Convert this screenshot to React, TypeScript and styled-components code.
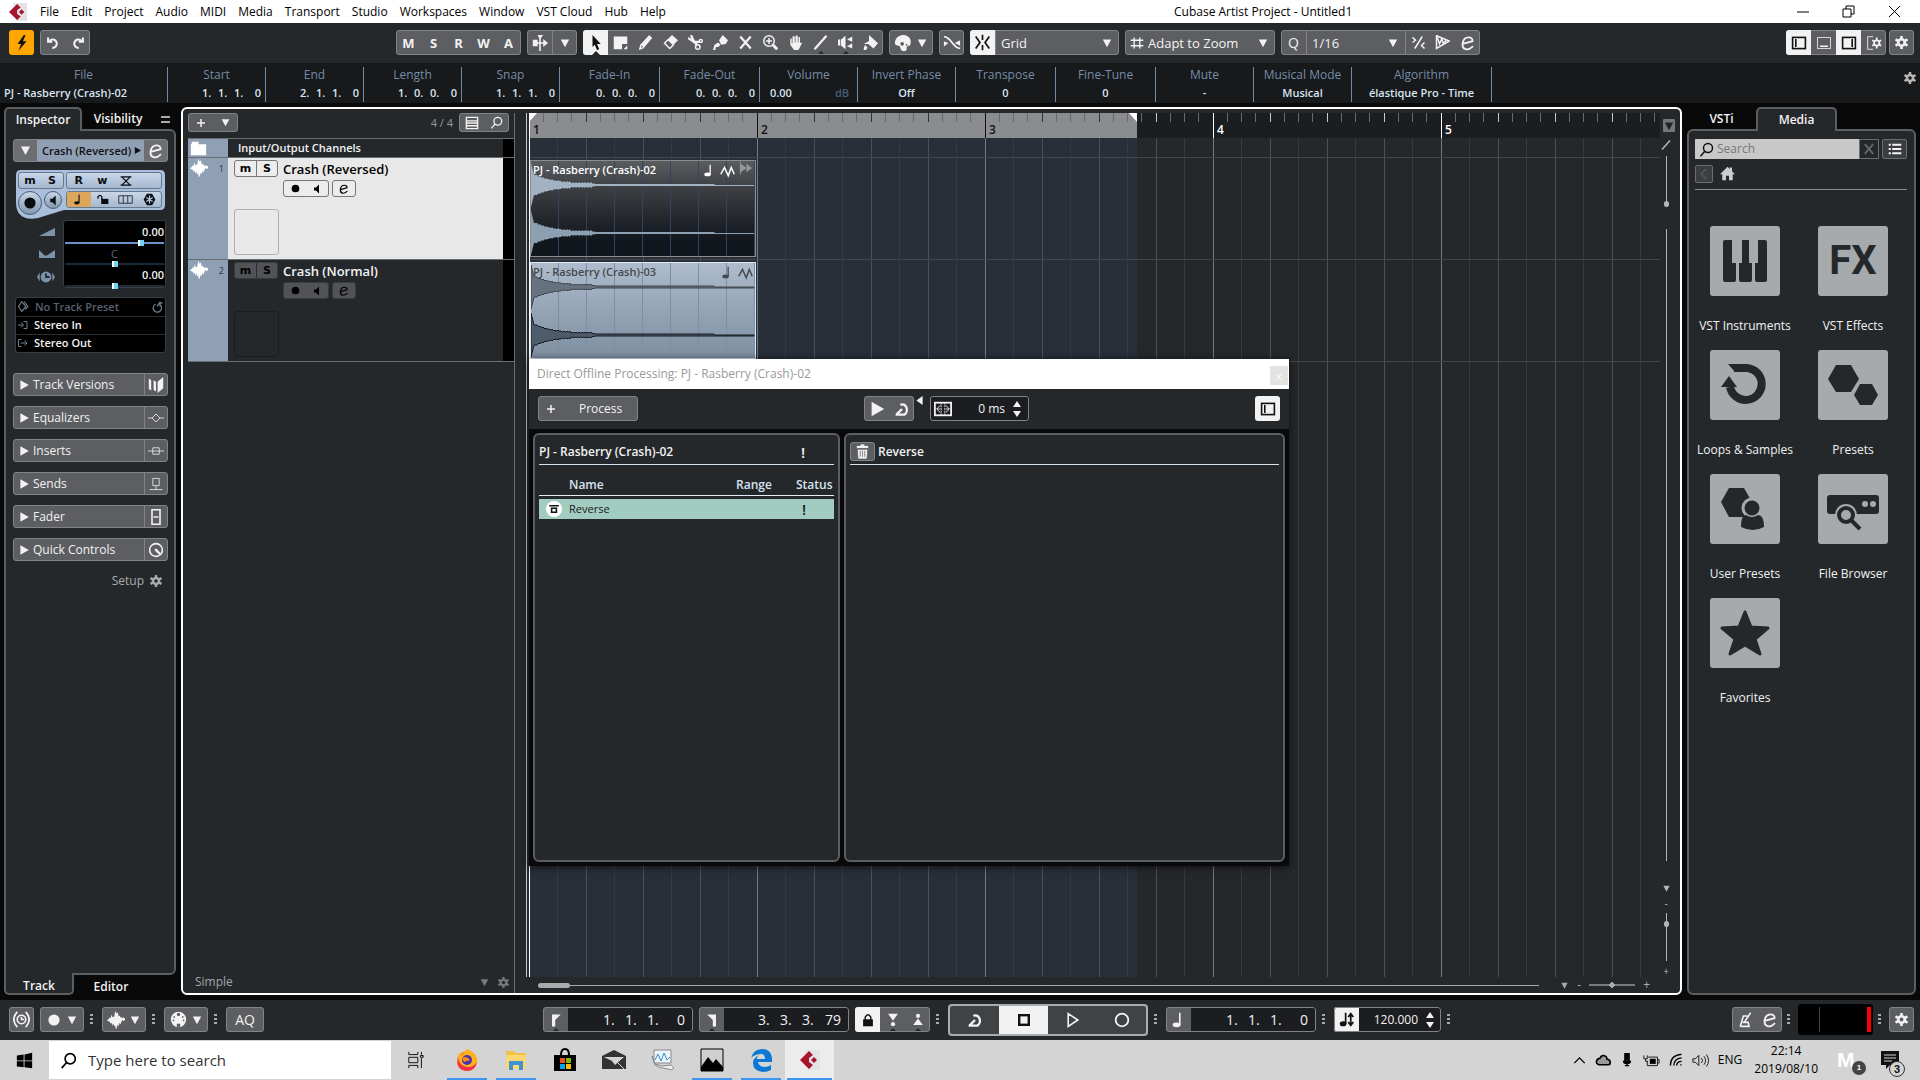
import React from "react";
import styled, { createGlobalStyle, css } from "styled-components";

const c = {
  panel: "#25282b",
  dark: "#17191b",
  black: "#090909",
  btn: "#5c5e62",
  edge: "#818387",
  blue: "#90a0b4",
  info: "#768ca8",
  light: "#f2f2f2",
  well: "#1c1d20",
};

const Global = createGlobalStyle`
  *, *::before, *::after { box-sizing: border-box; }
  body { margin: 0; background: ${c.black}; }
  body, button, input, select, table { font-family: "Open Sans", "Noto Sans", sans-serif; font-size: 12px; line-height: 16px; }
  button, input, select { margin: 0; padding: 0; border: 0; background: none; color: inherit; }
  svg { display: block; flex: none; }
`;

/* ---------- icons ---------- */

const icons: Record<string, React.ReactNode> = {
  bolt: <path d="M12 1 5 11h4l-3 8 9-11h-4l3-7z" fill="currentColor" />,
  undo: <g fill="none" stroke="currentColor" strokeWidth="3"><path d="M3 2v6h6" /><path d="M5 7a6 6 0 1 1 4 10" /></g>,
  redo: <g fill="none" stroke="currentColor" strokeWidth="3"><path d="M17 2v6h-6" /><path d="M15 7a6 6 0 1 0-4 10" /></g>,
  autoscroll: <path d="M9 4 7 0h7l-3 4v5h3V5l6 5-6 5v-4h-3v9H9v-9H7v3H1V6h6v3h2z" fill="currentColor" />,
  pointer: <path d="M6 0v16l3-3 3 7 3-1-3-7h5z" fill="currentColor" />,
  range: <path d="M1 2h18v10h-7v7H1zM19 14v5h-5z" fill="currentColor" />,
  pencil: <path d="M1 20l2-7L15 0l4 4L7 18zM5 14l-1 3 3-1z" fill="currentColor" fillRule="evenodd" />,
  eraser: <><path d="M12 0l8 7-6 6-8-7z" fill="currentColor" /><path d="M7 6l7 7-5 5-7-7z" fill="none" stroke="currentColor" strokeWidth="2" /></>,
  scissors: <g fill="none" stroke="currentColor" strokeWidth="2"><path d="M0 4l8 5 7 0" strokeWidth="3" /><path d="M4 0l4 9 4 4" strokeWidth="3" /><circle cx="17" cy="8" r="2" /><circle cx="13" cy="16" r="3" /></g>,
  glue: <path d="M13 0l7 7-3 5-6 1-3-6zM7 10l3 3-3 3-3 0-1 4H0l2-7z" fill="currentColor" />,
  cross: <path d="M3 2l14 16M17 2 3 18" stroke="currentColor" strokeWidth="3" />,
  zoomin: <g fill="none" stroke="currentColor" strokeWidth="2"><circle cx="8" cy="8" r="7" /><path d="M8 4v8M4 8h8" /><path d="M13 13l6 6" strokeWidth="4" /></g>,
  hand: <path d="M3 5q1-1 2 0v6h1V2q1-1 3 0v8h1V1q1-1 3 0v9h1V3q1-1 2 0v8l1-1q3 0 1 2l-4 8H8l-5-7z" fill="currentColor" />,
  line: <path d="M2 19 18 1" stroke="currentColor" strokeWidth="3" />,
  play2: <><path d="M0 6h3v8H0zM4 6l6-5v18l-6-5z" fill="currentColor" /><path d="M19 2v7l-7-3zM19 11v7l-7-3z" fill="currentColor" /></>,
  bucket: <path d="M8 0l12 11-6 7-7-6H1l7-4zM3 13l3 4-2 3H1v-3z" fill="currentColor" />,
  palette: <path d="M10 1c8 0 10 7 8 11-1 2-4 1-4 3 0 1 1 4-3 4-5 0-3-6-6-6-2 0-4-1-4-3 0-5 4-9 9-9zM9 9a2 2 0 1 0 .1 0zM14 11a1 1 0 1 0 .1 0z" fill="currentColor" fillRule="evenodd" />,
  xfade: <g><path d="M1 3c8 0 10 13 18 13" fill="none" stroke="currentColor" strokeWidth="2" /><path d="M1 8l5 2-5 4zM19 7l-6 3 6 3z" fill="currentColor" /></g>,
  snap: <g stroke="currentColor" strokeWidth="2" fill="none"><path d="M10 1v6M10 13v6M2 3l5 7-5 7M18 3l-5 7 5 7" /></g>,
  hash: <path d="M6 2v16M14 2v16M1 6h18M1 14h18" stroke="currentColor" strokeWidth="2" />,
  quant: <g stroke="currentColor" strokeWidth="2" fill="none"><path d="M15 2 5 18M2 3l4 4-4 3M18 10l-4 4 4 4" /></g>,
  warp: <g><path d="M2 1l17 7L2 18z" fill="none" stroke="currentColor" strokeWidth="2" /><path d="M3 3l3 9 3-7 2 6 4-4" fill="none" stroke="currentColor" strokeWidth="2" /></g>,
  e: <path d="M4 11l11-3c1-5-9-7-11 2-1 8 6 9 11 4" fill="none" stroke="currentColor" strokeWidth="2" strokeLinecap="round" />,
  gear: <><circle cx="10" cy="10" r="5" fill="none" stroke="currentColor" strokeWidth="4" /><path d="M10 0v4M10 16v4M1 5l4 3M15 12l4 3M19 5l-4 3M5 12l-4 3" stroke="currentColor" strokeWidth="4" /></>,
  zoneL: <><rect x="2" y="3" width="16" height="14" fill="none" stroke="currentColor" strokeWidth="2" /><path d="M6 5v10" stroke="currentColor" strokeWidth="2" /></>,
  zoneB: <><rect x="2" y="3" width="16" height="14" fill="none" stroke="currentColor" strokeWidth="1" /><path d="M5 14h10" stroke="currentColor" strokeWidth="2" /></>,
  zoneR: <><rect x="2" y="3" width="16" height="14" fill="none" stroke="currentColor" strokeWidth="2" /><path d="M14 5v10" stroke="currentColor" strokeWidth="2" /></>,
  zoneSet: <><path d="M9 3H3v14h6" fill="none" stroke="currentColor" /><circle cx="13" cy="10" r="3" fill="none" stroke="currentColor" strokeWidth="2" /><path d="M13 4v3M13 13v3M8 7l2 1M16 12l2 1M18 7l-2 1M10 12l-2 1" stroke="currentColor" strokeWidth="2" /></>,
  down: <path d="M3 4h14l-7 13z" fill="currentColor" />,
  right: <path d="M4 2l14 8-14 8z" fill="currentColor" />,
  left: <path d="M17 0v20L3 10z" fill="currentColor" />,
  dot: <circle cx="10" cy="10" r="7" fill="currentColor" />,
  ring: <circle cx="10" cy="10" r="7" fill="none" stroke="currentColor" strokeWidth="2" />,
  speaker: <path d="M4 7h4l6-6v18l-6-6H4z" fill="currentColor" />,
  note: <><ellipse cx="7" cy="16" rx="5" ry="3" fill="currentColor" /><path d="M11 16V1" stroke="currentColor" strokeWidth="2" /></>,
  lockOpen: <><rect x="8" y="9" width="11" height="8" fill="currentColor" /><path d="M9 10V6q-3-5-6 0v3" fill="none" stroke="currentColor" strokeWidth="2" /></>,
  lock: <><rect x="3" y="9" width="14" height="10" fill="currentColor" /><path d="M6 10V6q4-7 8 0v4" fill="none" stroke="currentColor" strokeWidth="2" /></>,
  lanes: <path d="M1 5h18v10H1zM7 5v10M13 5v10" fill="none" stroke="currentColor" strokeWidth="1" />,
  freeze: <><path d="M6 1h8l5 9-5 9H6l-5-9z" fill="currentColor" /><path d="M10 4v12M5 7l10 6M15 7 5 13" stroke="#b4c8e0" strokeWidth="2" /></>,
  xcurve: <path d="M1 3h18M1 17h18M3 3l14 14M17 3 3 17" fill="none" stroke="currentColor" strokeWidth="2" />,
  volume: <path d="M0 15 20 5v10z" fill="currentColor" />,
  pan: <path d="M0 5l7 7h3l10-7v10H0z" fill="currentColor" />,
  delay: <><path d="M3 5v10l-3-5zM17 5v10l3-5z" fill="currentColor" /><circle cx="10" cy="10" r="6" fill="currentColor" /><path d="M10 6v4h4" fill="none" stroke="#25282b" strokeWidth="2" /></>,
  diamond: <path d="M7 1l7 9-7 9-6-9zM11 1l7 9-5 5" fill="none" stroke="currentColor" strokeWidth="2" />,
  reload: <path d="M15 6a7 7 0 1 1-7-1M10 9l5-7 4 2M15 2v7" fill="none" stroke="currentColor" strokeWidth="2" />,
  inArrow: <path d="M0 10h10M6 5l5 5-5 5M11 3h7v14h-7" fill="none" stroke="currentColor" strokeWidth="2" />,
  outArrow: <path d="M7 3H1v14h6M5 10h13M13 5l5 5-5 5" fill="none" stroke="currentColor" strokeWidth="2" />,
  versions: <path d="M1 2l3 2v13l-3-2zM7 4l3 2v12l-3-2zM12 6l7-6v14l-7 6z" fill="currentColor" />,
  eq: <path d="M0 10h5l5-5 5 5-5 5-5-5M15 10h5" fill="none" stroke="currentColor" strokeWidth="1" />,
  insert: <path d="M0 10h20M6 6h8v8H6z" fill="none" stroke="currentColor" strokeWidth="1" />,
  send: <path d="M6 3h8v9H6zM10 12v5M2 17h16" fill="none" stroke="currentColor" strokeWidth="1" />,
  fader: <path d="M5 1h10v18H5zM7 10h6" fill="none" stroke="currentColor" strokeWidth="2" />,
  quick: <><circle cx="10" cy="10" r="8" fill="none" stroke="currentColor" strokeWidth="2" /><path d="M9 9l6 6" stroke="currentColor" strokeWidth="3" /></>,
  plus: <path d="M10 2v16M2 10h16" stroke="currentColor" strokeWidth="3" />,
  list: <path d="M2 2h16v16H2zM2 7h16M2 10h16M2 14h16" fill="none" stroke="currentColor" strokeWidth="2" />,
  find: <g fill="none" stroke="currentColor" strokeWidth="2"><circle cx="12" cy="8" r="6" /><path d="M8 12l-6 7" /></g>,
  folder: <path d="M2 2h8v3h9v13H1V5h1z" fill="currentColor" />,
  wave: <path d="M0 10l2-1 1-2 1 1 1-4 1 3 1-1 1 1 1-7 2 3 1-2 1 5 1-1 1 2 1 0 1 1 1-1 3 2v1l-3 1-1-1-1 2-1 3-1-2-1 4-1-2-2 6-1-5-1 1-1-3-1 2-1-3-1 1-1-2-2-1z" fill="currentColor" />,
  bullets: <path d="M1 4h3M6 4h13M1 10h3M6 10h13M1 16h3M6 16h13" stroke="currentColor" strokeWidth="3" />,
  back: <path d="M13 3l-7 7 7 7" fill="none" stroke="currentColor" strokeWidth="2" />,
  home: <path d="M10 1l3 3V2h3v5l4 4h-3v8h-5v-6H8v6H3v-8H0z" fill="currentColor" />,
  zig: <path d="M1 15l5-9 5 11 4-11 4 9" fill="none" stroke="currentColor" strokeWidth="2" />,
  reversed: <path d="M2 0v20M2 4l8 6-8 6zM11 5l7 5-7 5z" fill="currentColor" stroke="currentColor" strokeWidth="1" />,
  loop: <path d="M2 17h11a5 6 0 1 0-5-12M10 10l-7 7" fill="none" stroke="currentColor" strokeWidth="3" />,
  tail: <><rect x="1" y="3" width="18" height="14" fill="none" stroke="currentColor" strokeWidth="2" /><path d="M8 3v14M12 3v14" stroke="currentColor" strokeDasharray="2 1" /><path d="M7 6l-4 4 4 4M13 6l4 4-4 4M3 10h4M13 10h4" fill="none" stroke="currentColor" strokeWidth="1" /></>,
  trash: <path d="M7 0h6v2h5v4H2V2h5zM3 7h14l-1 13H4zM7 9v8M10 9v8M13 9v8" fill="currentColor" stroke="#5c5e62" strokeWidth="1" />,
  process: <><circle cx="10" cy="10" r="10" fill="#fff" /><path d="M4 6h12M7 9h6v5H7z" fill="none" stroke="#111" strokeWidth="2" /></>,
  clock: <g fill="none" stroke="currentColor" strokeWidth="2"><circle cx="10" cy="10" r="5" /><path d="M10 7v3h3M5 1q-8 9 0 18M15 1q8 9 0 18" /></g>,
  midi: <><circle cx="10" cy="10" r="9" fill="currentColor" /><g fill="#5c5e62"><circle cx="10" cy="4" r="2" /><circle cx="5" cy="7" r="1" /><circle cx="15" cy="7" r="1" /><circle cx="4" cy="11" r="1" /><circle cx="16" cy="11" r="1" /><path d="M8 15h4v4H8z" /></g></>,
  locL: <path d="M5 3h11l-7 7v8H5z" fill="currentColor" />,
  locR: <path d="M4 3h11v15h-4v-8z" fill="currentColor" />,
  punchIn: <><path d="M3 1h14l-7 10z" fill="currentColor" /><circle cx="10" cy="16" r="3" fill="currentColor" /></>,
  punchOut: <><path d="M3 17h14l-7-9z" fill="currentColor" /><circle cx="10" cy="4" r="3" fill="currentColor" /></>,
  stop: <rect x="4" y="4" width="12" height="12" fill="none" stroke="currentColor" strokeWidth="3" />,
  playO: <path d="M4 2l12 8-12 8z" fill="none" stroke="currentColor" strokeWidth="2" />,
  tempo: <><ellipse cx="6" cy="15" rx="4" ry="3" fill="currentColor" /><path d="M9 15V2M15 3v14M12 7l3-4 3 4M12 13l3 4 3-4" stroke="currentColor" strokeWidth="2" fill="none" /></>,
  metro: <path d="M4 18 8 5h5M7 13h7l1 5H4M9 13l8-12" fill="none" stroke="currentColor" strokeWidth="2" />,
  windows: <path d="M1 4l8-1v7H1zM10 3l9-2v9h-9zM1 11h8v7l-8-1zM10 11h9v8l-9-1z" fill="currentColor" />,
  taskview: <path d="M2 1v3h10V1M2 7h10v6H2zM2 19v-3h10v3M16 1v3M16 8v11M15 5h3v2h-3z" fill="none" stroke="currentColor" strokeWidth="1" />,
  chevUp: <path d="M2 14l8-8 8 8" fill="none" stroke="currentColor" strokeWidth="2" />,
  cloud: <path d="M5 16q-4-1-3-5 1-3 4-3 3-6 8-2 1 1 1 3 4 0 4 4 0 3-3 3z" fill="#999" stroke="currentColor" strokeWidth="2" />,
  mic: <path d="M7 1h6v11H7zM5 11q0 4 5 4t5-4M10 15v4M7 18h6" fill="currentColor" stroke="currentColor" strokeWidth="2" />,
  battery: <><path d="M6 6h11v10H5v-5M17 9h2v4h-2M1 4v4h4V4M3 8v3h3" fill="none" stroke="currentColor" strokeWidth="1" /><path d="M8 8h7v6H8z" fill="currentColor" /></>,
  wifi: <path d="M2 18Q2 3 18 2M7 18q0-10 11-11M11 18q0-6 7-6M16 17h2" fill="none" stroke="currentColor" strokeWidth="2" />,
  sound: <path d="M1 8h3l4-4v12l-4-4H1zM11 7q3 3 0 6M14 5q4 5 0 10M17 3q5 7 0 14" fill="none" stroke="currentColor" strokeWidth="1" />,
};

const Icon = ({ n, s = 16 }: { n: string; s?: number }) => (
  <svg width={s} height={s} viewBox="0 0 20 20" aria-hidden="true">{icons[n]}</svg>
);

const CubaseMark = ({ s }: { s: number }) => (
  <svg width={s} height={s} viewBox="0 0 20 20" aria-hidden="true">
    <path d="M5 0h15v20H8z" fill="#e3e3e5" />
    <path d="M9 1l4 4-4 3v4l4 3-4 4-9-9z" fill="#a8142c" />
    <path d="M14 7l3 3-3 3-3-3z" fill="#a8142c" />
  </svg>
);

/* ---------- shared parts ---------- */

const Row = styled.div<{ $gap?: number }>`
  display: flex;
  align-items: center;
  gap: ${(p) => p.$gap ?? 0}px;
`;

const Group = styled.div`
  position: relative;
  display: flex;
  height: 25px;
  border-radius: 3px;
  background: ${c.btn};
  color: ${c.light};
  overflow: hidden;
  &::after {
    content: "";
    position: absolute;
    inset: 0;
    border: 1px solid ${c.edge};
    border-radius: 3px;
    pointer-events: none;
  }
`;

const Tool = styled.button<{ $on?: boolean; $w?: number; $mark?: boolean; $split?: boolean }>`
  position: relative;
  display: flex;
  flex: 1 0 auto;
  align-items: center;
  justify-content: center;
  gap: 4px;
  min-width: ${(p) => p.$w ?? 25}px;
  font-weight: 700;
  font-size: 13px;
  ${(p) => p.$on && css`background: ${c.light}; color: #111; z-index: 1;`}
  ${(p) => p.$split && css`border-left: 1px solid ${c.edge};`}
  ${(p) => p.$mark && css`
    &::after {
      content: "";
      position: absolute;
      bottom: 0;
      border: 4px solid transparent;
      border-top: 0;
      border-bottom-color: ${c.panel};
    }
  `}
`;

const Dots = styled.span`
  width: 3px;
  height: 12px;
  margin-right: 3px;
  background: repeating-linear-gradient(#aaa 0 2px, transparent 2px 4px);
`;

const Range = styled.input<{ $fill?: string; $thumb?: string }>`
  appearance: none;
  display: block;
  width: 100%;
  height: 6px;
  background: linear-gradient(${(p) => p.$fill ?? "#1c2a35"}, ${(p) => p.$fill ?? "#1c2a35"}) center / 100% 2px no-repeat;
  &::-webkit-slider-thumb {
    appearance: none;
    width: 6px;
    height: 6px;
    background: ${(p) => p.$thumb ?? "linear-gradient(90deg, #fff 2px, #6fd3f5 2px)"};
  }
`;

/* ---------- menu bar ---------- */

const MenuBar = styled.header`
  position: relative;
  display: flex;
  align-items: center;
  height: 23px;
  padding: 0 18px 0 9px;
  background: #fff;
  color: #000;
`;
const Menus = styled.nav`
  display: flex;
  flex: 1;
  gap: 12px;
  margin-left: 13px;
`;
const WindowTitle = styled.h1`
  position: absolute;
  left: 1174px;
  margin: 0;
  font-size: 12px;
  font-weight: 400;
`;
const WinButtons = styled.div`
  display: flex;
  gap: 31px;
`;

const menus = ["File", "Edit", "Project", "Audio", "MIDI", "Media", "Transport", "Studio", "Workspaces", "Window", "VST Cloud", "Hub", "Help"];

/* ---------- toolbar ---------- */

const ToolBar = styled.div`
  display: flex;
  align-items: center;
  justify-content: space-between;
  height: 40px;
  padding: 0 6px 1px 9px;
  background: ${c.panel};
`;
const Activate = styled.button`
  display: grid;
  place-items: center;
  width: 25px;
  height: 25px;
  border-radius: 3px;
  background: #ffa600;
  color: #111;
`;
const SelectBox = styled.label<{ $w: number }>`
  position: relative;
  display: flex;
  align-items: center;
  width: ${(p) => p.$w}px;
  padding-left: 5px;
  gap: 4px;
  border-left: 1px solid ${c.edge};
  &:first-child { border-left: 0; }
  svg:last-child { position: absolute; right: 6px; pointer-events: none; }
`;
const Select = styled.select`
  appearance: none;
  flex: 1;
  height: 23px;
  font-size: 13px;
  color: ${c.light};
`;

/* ---------- info line ---------- */

const InfoLine = styled.div`
  display: flex;
  height: 40px;
  padding: 4px 4px 1px 0;
  background: ${c.dark};
`;
const InfoCell = styled.div<{ $w: number; $align: string }>`
  display: flex;
  flex-direction: column;
  justify-content: space-between;
  width: ${(p) => p.$w}px;
  padding: 0 4px 1px 4px;
  border-right: 1px solid #6f8aa6;
  color: #d8e4f2;
  font-size: 11px;
  font-weight: 600;
  text-align: ${(p) => p.$align};
  white-space: nowrap;
`;
const InfoLabel = styled.span`
  color: ${c.info};
  font-size: 12px;
  line-height: 15px;
  font-weight: 400;
  text-align: center;
`;
const Split = styled.span`
  display: flex;
  justify-content: space-between;
  padding: 0 4px 0 6px;
  i { color: #4a5f78; font-style: normal; }
`;
const Time = styled.span<{ $pitch: number; $last: number }>`
  display: grid;
  grid-template-columns: repeat(3, ${(p) => p.$pitch}px) ${(p) => p.$last}px;
  justify-content: end;
  text-align: left;
  span:last-child { text-align: right; }
`;
const TimeValue = ({ v, pitch = 16, last = 11 }: { v: string; pitch?: number; last?: number }) => (
  <Time $pitch={pitch} $last={last}>{v.split(" ").map((p, i) => <span key={i}>{p}</span>)}</Time>
);
const InfoGear = styled.button`
  margin-left: auto;
  height: 22px;
  color: #b9b9b9;
`;

const infoCells: [string, string, number, string][] = [
  ["File", "PJ - Rasberry (Crash)-02", 168, "left"],
  ["Start", "1. 1. 1. 0", 98, "time"],
  ["End", "2. 1. 1. 0", 98, "time"],
  ["Length", "1. 0. 0. 0", 98, "time"],
  ["Snap", "1. 1. 1. 0", 98, "time"],
  ["Fade-In", "0. 0. 0. 0", 100, "time"],
  ["Fade-Out", "0. 0. 0. 0", 100, "time"],
  ["Volume", "0.00", 98, "volume"],
  ["Invert Phase", "Off", 98, "center"],
  ["Transpose", "0", 100, "center"],
  ["Fine-Tune", "0", 100, "center"],
  ["Mute", "-", 98, "center"],
  ["Musical Mode", "Musical", 98, "center"],
  ["Algorithm", "élastique Pro - Time", 140, "center"],
];

/* ---------- main layout ---------- */

const Shell = styled.div`
  position: relative;
  display: flex;
  flex-direction: column;
  min-height: 100vh;
  background: ${c.black};
  color: ${c.light};
`;
const Main = styled.main`
  display: grid;
  flex: 1;
  grid-template-columns: 172px minmax(0, 1fr) 229px;
  gap: 5px;
  padding: 4px 4px 5px 4px;
`;
const Side = styled.aside`
  display: flex;
  flex-direction: column;
`;
const TabRow = styled.div<{ $bottom?: boolean }>`
  position: relative;
  z-index: 1;
  display: flex;
  align-items: center;
  height: ${(p) => (p.$bottom ? 22 : 24)}px;
  ${(p) => (p.$bottom ? "margin-top: -2px;" : "margin-bottom: -2px;")}
`;
const Tab = styled.button<{ $on?: boolean; $w: number; $bottom?: boolean }>`
  width: ${(p) => p.$w}px;
  height: 100%;
  font-weight: 600;
  ${(p) => p.$on && css`
    background: ${c.panel};
    border: 2px solid ${c.btn};
    border-radius: 5px 5px 0 0;
    border-bottom: 0;
  `}
  ${(p) => p.$bottom && css`padding-top: 5px;`}
  ${(p) => p.$on && p.$bottom && css`
    border: 2px solid ${c.btn};
    border-top: 0;
    border-radius: 0 0 5px 5px;
  `}
`;
const SidePanel = styled.div<{ $pad: string; $corner: string }>`
  flex: 1;
  padding: ${(p) => p.$pad};
  border: 2px solid ${c.btn};
  border-radius: ${(p) => p.$corner};
  background: ${c.panel};
`;

/* ---------- inspector ---------- */

const Burger = styled.span`
  width: 9px;
  height: 7px;
  margin-left: auto;
  margin-right: 6px;
  border: solid #aaa;
  border-width: 2px 0;
`;
const NameBar = styled.div`
  display: flex;
  height: 23px;
  border: 1px solid ${c.edge};
  border-radius: 3px;
  overflow: hidden;
  background: #6d6e71;
`;
const TrackName = styled.div`
  display: flex;
  flex: 1;
  align-items: center;
  justify-content: space-between;
  padding: 0 2px 0 5px;
  background: ${c.blue};
  color: #111;
  font-size: 11px;
  font-weight: 600;
  white-space: nowrap;
`;
const Cell24 = styled.button`
  display: grid;
  place-items: center;
  width: 23px;
`;
const Controls = styled.div`
  position: relative;
  display: grid;
  grid-template-columns: 46px 96px;
  align-content: start;
  gap: 2px 2px;
  width: 149px;
  height: 50px;
  margin: 8px 0 0 3px;
  padding: 2px;
  color: #0b0d10;
`;
const Blob = styled.svg`
  position: absolute;
  inset: 0;
`;
const Strip = styled.div<{ $cols: number }>`
  position: relative;
  display: grid;
  grid-template-columns: repeat(${(p) => p.$cols}, 1fr);
  height: 17px;
  border: 1px solid #67798e;
  border-radius: 3px;
  background: linear-gradient(#c8d6e8, #a5b8d0);
  overflow: hidden;
`;
const StripBtn = styled.button<{ $hot?: boolean }>`
  display: grid;
  place-items: center;
  font: 700 11px/15px "DejaVu Sans", sans-serif;
  background: ${(p) => (p.$hot ? "#dca75c" : "none")};
`;
const Rounds = styled.div`
  position: relative;
  display: flex;
  align-items: flex-start;
  gap: 2px;
`;
const Round = styled.button<{ $s: number }>`
  display: grid;
  place-items: center;
  width: ${(p) => p.$s}px;
  height: ${(p) => p.$s}px;
  border: 1px solid #4a5c70;
  border-radius: 50%;
  background: linear-gradient(#c8d6e8, #8298b2);
`;
const Levels = styled.div`
  display: grid;
  grid-template-columns: 50px 103px;
`;
const LevelIcons = styled.div`
  display: flex;
  flex-direction: column;
  align-items: flex-end;
  gap: 6px;
  padding: 4px 8px 0 0;
  color: #7c92ab;
`;
const LevelBox = styled.div`
  height: 68px;
  padding: 3px 1px 0;
  border: 1px solid #353d45;
  border-radius: 3px;
  background: #000;
  font-size: 11px;
  line-height: 16px;
  font-weight: 600;
  text-align: right;
`;
const PanValue = styled.div`
  color: #4f6a8a;
  font-weight: 400;
  text-align: center;
  line-height: 15px;
`;
const Routing = styled.div`
  margin: 9px 2px 20px;
  border: 1px solid #353d45;
  border-radius: 3px;
  background: #000;
`;
const Route = styled.div<{ $dim?: boolean }>`
  display: flex;
  align-items: center;
  gap: 6px;
  height: 18px;
  padding: 0 2px 1px;
  border-top: 1px solid #262d33;
  font-size: 11px;
  line-height: 14px;
  font-weight: 600;
  color: ${(p) => (p.$dim ? "#59636f" : c.light)};
  &:first-child { border-top: 0; }
  svg { color: #6f8394; }
  span { flex: 1; }
`;
const Sections = styled.div`
  display: flex;
  flex-direction: column;
  gap: 10px;
`;
const Section = styled.button`
  display: flex;
  align-items: center;
  height: 23px;
  padding-left: 4px;
  border: 1px solid ${c.edge};
  border-radius: 3px;
  background: ${c.btn};
  gap: 3px;
  text-align: left;
  span { flex: 1; }
`;
const SectionIcon = styled.i`
  display: grid;
  place-items: center;
  width: 23px;
  height: 21px;
  border-left: 1px solid ${c.edge};
`;
const Setup = styled.button`
  display: flex;
  align-items: center;
  gap: 6px;
  margin: 12px 6px 0 auto;
  color: #aaa;
`;

const sections: [string, string][] = [
  ["Track Versions", "versions"],
  ["Equalizers", "eq"],
  ["Inserts", "insert"],
  ["Sends", "send"],
  ["Fader", "fader"],
  ["Quick Controls", "quick"],
];

const Inspector = () => (
  <Side>
    <TabRow>
      <Tab $on $w={78}>Inspector</Tab>
      <Tab $w={72}>Visibility</Tab>
      <Burger />
    </TabRow>
    <SidePanel $pad="8px 6px 8px 7px" $corner="0 6px 6px 0">
      <NameBar>
        <Cell24 aria-label="Collapse"><Icon n="down" s={13} /></Cell24>
        <TrackName>Crash (Reversed)<Icon n="right" s={9} /></TrackName>
        <Cell24 aria-label="Edit channel"><Icon n="e" s={18} /></Cell24>
      </NameBar>
      <Controls>
        <Blob width="149" height="50" viewBox="0 0 149 50" aria-hidden="true">
          <path d="M5 0h139q5 0 5 5v30q0 5-5 5H48L22 48Q0 52 0 32V5q0-5 5-5z" fill="#a9bfdc" />
        </Blob>
        <Strip $cols={2}><StripBtn>m</StripBtn><StripBtn>S</StripBtn></Strip>
        <Strip $cols={4}><StripBtn>R</StripBtn><StripBtn>w</StripBtn><StripBtn aria-label="Fades"><Icon n="xcurve" s={12} /></StripBtn></Strip>
        <Rounds>
          <Round $s={24} aria-label="Record"><Icon n="dot" s={16} /></Round>
          <Round $s={18} aria-label="Monitor"><Icon n="speaker" s={11} /></Round>
        </Rounds>
        <Strip $cols={4}>
          <StripBtn $hot aria-label="Timebase"><Icon n="note" s={11} /></StripBtn>
          <StripBtn aria-label="Lock"><Icon n="lockOpen" s={13} /></StripBtn>
          <StripBtn aria-label="Lanes"><Icon n="lanes" s={15} /></StripBtn>
          <StripBtn aria-label="Freeze"><Icon n="freeze" s={13} /></StripBtn>
        </Strip>
      </Controls>
      <Levels>
        <LevelIcons><Icon n="volume" /><Icon n="pan" /><Icon n="delay" s={18} /></LevelIcons>
        <LevelBox>
          0.00
          <Range type="range" aria-label="Volume" $fill="#6b92c4" defaultValue={78} />
          <PanValue>C</PanValue>
          <Range type="range" aria-label="Pan" defaultValue={50} />
          0.00
          <Range type="range" aria-label="Delay" defaultValue={50} />
        </LevelBox>
      </Levels>
      <Routing>
        <Route $dim><Icon n="diamond" s={11} /><span>No Track Preset</span><Icon n="reload" s={12} /></Route>
        <Route><Icon n="inArrow" s={10} /><span>Stereo In</span></Route>
        <Route><Icon n="outArrow" s={10} /><span>Stereo Out</span></Route>
      </Routing>
      <Sections>
        {sections.map(([t, i]) => (
          <Section key={t}><Icon n="right" s={12} /><span>{t}</span><SectionIcon><Icon n={i} s={16} /></SectionIcon></Section>
        ))}
      </Sections>
      <Setup>Setup<Icon n="gear" s={12} /></Setup>
    </SidePanel>
    <TabRow $bottom>
      <Tab $on $bottom $w={70}>Track</Tab>
      <Tab $bottom $w={74}>Editor</Tab>
    </TabRow>
  </Side>
);

/* ---------- project window ---------- */

const Project = styled.section`
  display: grid;
  grid-template-columns: 332px minmax(0, 1fr) 20px;
  padding-top: 4px;
  border: 2px solid #fff;
  border-radius: 6px;
  background: ${c.panel};
`;
const TrackList = styled.div`
  display: flex;
  flex-direction: column;
  padding-left: 5px;
  border-right: 1px solid #6b6d70;
`;
const ListHead = styled.div`
  display: flex;
  align-items: center;
  justify-content: space-between;
  height: 25px;
  padding: 0 5px 6px 0;
`;
const SmallGroup = styled(Group)`
  height: 19px;
`;
const Counter = styled.span`
  color: #95989c;
  font-size: 11px;
`;
const IoRow = styled.div`
  display: grid;
  grid-template-columns: 40px 1fr 11px;
  height: 20px;
  border: solid #6b6d70;
  border-width: 1px 0;
  font-weight: 600;
  font-size: 11px;
  line-height: 18px;
`;
const ColorBar = styled.div`
  display: flex;
  justify-content: space-between;
  align-items: flex-start;
  padding: 1px 4px 0 2px;
  background: ${c.blue};
  color: #fff;
`;
const TrackNo = styled.span`
  padding-top: 2px;
  color: #333;
  font-size: 9px;
`;
const RowBody = styled.div`
  padding-left: 10px;
`;
const BlackEnd = styled.div`
  background: #000;
`;
const Track = styled.div<{ $on?: boolean }>`
  display: grid;
  grid-template-columns: 40px 1fr 11px;
  height: 102px;
  border-bottom: 1px solid #6b6d70;
  ${(p) => p.$on && css`background: #e8e8e8; color: #000;`}
`;
const TrackBody = styled.div`
  display: grid;
  grid-template-columns: 45px 1fr;
  grid-template-rows: 20px 20px 56px;
  column-gap: 4px;
  padding: 1px 6px;
`;
const MS = styled.div<{ $on?: boolean }>`
  display: grid;
  grid-auto-flow: column;
  grid-auto-columns: 1fr;
  width: max-content;
  min-width: 22px;
  height: 17px;
  margin-top: 1px;
  border: 1px solid ${(p) => (p.$on ? "#777" : "#393c3f")};
  border-radius: 3px;
  background: ${(p) => (p.$on ? "#ececec" : "#515356")};
  color: #000;
  button { display: grid; place-items: center; min-width: 21px; font: 700 11px/15px "DejaVu Sans", sans-serif; }
  button + button { border-left: 1px solid ${(p) => (p.$on ? "#777" : "#2c2e30")}; }
`;
const TrackTitle = styled.h2`
  margin: 0;
  font-size: 13px;
  line-height: 20px;
  font-weight: 600;
`;
const TrackButtons = styled.div`
  grid-column: 2;
  display: flex;
  gap: 3px;
  button { min-width: 22px; }
  button + button { border-left: 0; }
`;
const Picture = styled.div<{ $on?: boolean }>`
  align-self: end;
  width: 45px;
  height: 46px;
  border: 1px solid ${(p) => (p.$on ? "#b0b0b0" : "#1b1c1e")};
  border-radius: 3px;
`;
const ListFoot = styled.div`
  display: flex;
  align-items: center;
  gap: 8px;
  margin-top: auto;
  height: 22px;
  padding: 0 5px 0 7px;
  color: #a3a5a8;
  span { flex: 1; }
  svg { color: #77797c; }
`;

const TrackRow = ({ no, name, on }: { no: number; name: string; on?: boolean }) => (
  <Track $on={on}>
    <ColorBar><Icon n="wave" s={18} /><TrackNo>{no}</TrackNo></ColorBar>
    <TrackBody>
      <MS $on={on}><button>m</button><button>S</button></MS>
      <TrackTitle>{name}</TrackTitle>
      <TrackButtons>
        <MS $on={on}><button aria-label="Record"><Icon n="dot" s={11} /></button><button aria-label="Monitor"><Icon n="speaker" s={10} /></button></MS>
        <MS $on={on}><button aria-label="Edit"><Icon n="e" s={12} /></button></MS>
      </TrackButtons>
      <Picture $on={on} />
    </TrackBody>
    <BlackEnd />
  </Track>
);

const Timeline = styled.div`
  display: flex;
  flex-direction: column;
  padding-left: 11px;
`;
const Scroller = styled.div`
  position: relative;
  display: flex;
  flex: 1;
  flex-direction: column;
  border-left: 1px solid #c9c9c9;
  padding-left: 2px;
  overflow: hidden;
`;
const Ruler = styled.div`
  position: relative;
  height: 25px;
  background: ${c.well};
`;
const Ticks = styled.div<{ $dark?: boolean }>`
  position: absolute;
  inset: 0 auto 0 0;
  width: ${(p) => (p.$dark ? "608px" : "100%")};
  background:
    linear-gradient(90deg, ${(p) => (p.$dark ? "#111" : "#fff")} 1px, transparent 1px) 0 0 / 228px 25px repeat-x,
    linear-gradient(90deg, ${(p) => (p.$dark ? "#333" : "#c8c8c8")} 1px, transparent 1px) 0 0 / 57px 9px repeat-x,
    linear-gradient(90deg, transparent 14px, #68696d 14px 15px, transparent 15px 28px, #68696d 28px 29px, transparent 29px 42px, #68696d 42px 43px, transparent 43px) 0 0 / 57px 9px repeat-x,
    ${(p) => (p.$dark ? "#8b8c90" : "none")};
`;
const BarNo = styled.span<{ $dark?: boolean }>`
  position: absolute;
  top: 9px;
  padding-left: 4px;
  color: ${(p) => (p.$dark ? "#111" : "#fff")};
  font-weight: 600;
`;
const Locator = styled.i<{ $end?: boolean }>`
  position: absolute;
  top: 0;
  left: ${(p) => (p.$end ? 600 : 0)}px;
  width: 8px;
  height: 9px;
  background: #fff;
  clip-path: ${(p) => (p.$end ? "polygon(0 0, 100% 0, 100% 100%)" : "polygon(0 0, 100% 0, 0 100%)")};
`;
const Canvas = styled.div`
  position: relative;
  flex: 1;
  background:
    linear-gradient(90deg, #77797c 1px, transparent 1px) 0 0 / 228px 100%,
    linear-gradient(90deg, #4d5053 1px, transparent 1px) 0 0 / 57px 100%,
    linear-gradient(90deg, transparent 28px, #36393d 28px 29px, transparent 29px) 0 0 / 57px 100%,
    linear-gradient(90deg, #282f39, #282f39) 0 0 / 608px 100% no-repeat;
`;
const Lane = styled.div<{ $h: number }>`
  position: relative;
  height: ${(p) => p.$h}px;
  border-bottom: 1px solid #43464a;
`;
const Playhead = styled.i`
  position: absolute;
  top: 0;
  bottom: 0;
  left: 2px;
  width: 1px;
  background: #fff;
`;
const Clip = styled.article<{ $light?: boolean }>`
  position: absolute;
  left: 1px;
  top: 2px;
  width: 226px;
  height: 97px;
  border: 1px solid ${(p) => (p.$light ? "#dbe6f2" : "#8a8c90")};
  background:
    linear-gradient(90deg, transparent 27px, ${(p) => (p.$light ? "#7d8fa4" : "#33455c")} 27px 28px, transparent 28px) 0 0 / 28px 100%,
    ${(p) => (p.$light ? "linear-gradient(#aebccd, #8fa0b2 60%, #7e8fa1)" : "linear-gradient(#5a5c60, #3b3d41 30%, #11161d 85%)")};
`;
const ClipHead = styled.header<{ $light?: boolean }>`
  position: relative;
  display: flex;
  align-items: center;
  gap: 4px;
  height: 18px;
  padding: 0 2px;
  color: ${(p) => (p.$light ? "#45484e" : "#fff")};
  font-size: 11px;
  font-weight: 600;
  span { flex: 1; }
`;
const Dimmed = styled.b`
  align-self: flex-start;
  color: #96989d;
`;
const WaveSvg = styled.svg`
  position: absolute;
  left: 0;
  top: 0;
`;

const amp = (x: number) => {
  if (x > 183) return 0.5;
  const decay = x < 4 ? 22 - x * 4 : 9 * Math.exp(-(x - 4) / 20) + 1;
  return decay + (x > 4 && x < 66 && x % 3 === 0 ? 1 : 0);
};
const wavePath = (mid: number) => {
  const xs = Array.from({ length: 224 }, (_, i) => i);
  const up = xs.map((x) => `${x} ${Math.round(mid - amp(x))}`);
  const lo = xs.map((x) => `${x} ${Math.round(mid + amp(x))}`).reverse();
  return `M${up.join("L")}L${lo.join("L")}z`;
};

const AudioClip = ({ name, light }: { name: string; light?: boolean }) => (
  <Clip $light={light}>
    <WaveSvg width="224" height="95" viewBox="0 0 224 95" aria-hidden="true">
      <path d={wavePath(24)} fill={light ? "#66727f" : "#a2b2c2"} stroke={light ? "#3e464f" : "none"} strokeWidth="1" />
      <path d={wavePath(72)} fill={light ? "#4e5b6b" : "#8da0b2"} stroke={light ? "#151a20" : "none"} strokeWidth="1" />
    </WaveSvg>
    <ClipHead $light={light}>
      <span>{name}</span><Icon n="note" s={13} /><Icon n="zig" s={15} />
      {!light && <Dimmed><Icon n="reversed" s={14} /></Dimmed>}
    </ClipHead>
  </Clip>
);

const HScroll = styled.div`
  display: flex;
  align-items: center;
  gap: 8px;
  height: 16px;
  padding: 0 10px 0 12px;
  color: #aaa;
`;
const HTrack = styled.div`
  flex: 1;
  height: 1px;
  margin-right: 13px;
  background: #aaa;
`;
const HThumb = styled.div`
  width: 32px;
  height: 5px;
  margin-top: -2px;
  border-radius: 3px;
  background: #aaa;
`;
const HZoom = styled.div`
  width: 46px;
`;
const VStrip = styled.div`
  display: flex;
  flex-direction: column;
  align-items: center;
  gap: 6px;
  padding: 6px 8px 18px 0;
  color: #b5b5b5;
  font-size: 10px;
  line-height: 8px;
`;
const VMenu = styled.button`
  width: 12px;
  height: 13px;
  margin: 0 -2px 2px 4px;
  border-radius: 1px;
  background: #75767a;
  color: #222;
`;
const VLine = styled.div<{ $h?: number }>`
  position: relative;
  width: 1px;
  ${(p) => (p.$h ? css`height: ${p.$h}px;` : css`flex: 1;`)}
  background: #b5b5b5;
`;
const VGap = styled.div`
  height: 11px;
`;
const VKnob = styled.i<{ $y: number }>`
  position: absolute;
  top: ${(p) => p.$y}px;
  left: -2px;
  width: 5px;
  height: 6px;
  border-radius: 3px;
  background: #b5b5b5;
`;

/* ---------- media rack ---------- */

const SearchRow = styled.div`
  display: flex;
  gap: 3px;
  height: 20px;
`;
const SearchBox = styled.label`
  display: flex;
  flex: 1;
  min-width: 0;
  align-items: center;
  gap: 3px;
  padding-left: 4px;
  background: #c8c8c8;
  color: #111;
`;
const SearchInput = styled.input`
  flex: 1;
  min-width: 0;
  &::placeholder { color: #777; opacity: 1; }
`;
const ClearBtn = styled.button`
  display: grid;
  flex: none;
  place-items: center;
  width: 20px;
  height: 20px;
  border: 1px solid #6b6d70;
  background: ${c.panel};
  color: #66686b;
`;
const FlatBtn = styled.button<{ $w: number }>`
  display: grid;
  flex: none;
  place-items: center;
  width: ${(p) => p.$w}px;
  border: 1px solid #6b6d70;
  border-radius: 2px;
  background: #3b3d41;
`;
const Crumbs = styled.div`
  display: flex;
  align-items: center;
  gap: 7px;
  height: 31px;
  padding: 0 0 1px;
  border-bottom: 1px solid #8b8d90;
  color: #ccc;
  button { height: 18px; }
  button:first-child { color: #55585c; }
`;
const Tiles = styled.div`
  display: grid;
  grid-template-columns: 108px 108px;
  grid-auto-rows: 124px;
  padding-top: 36px;
  margin: 0 -4px;
`;
const TileButton = styled.button`
  display: flex;
  flex-direction: column;
  align-items: center;
  gap: 22px;
  white-space: nowrap;
`;
const TileArt = styled.span`
  display: grid;
  place-items: center;
  width: 70px;
  height: 70px;
  border-radius: 3px;
  background: #a6aaad;
  color: ${c.panel};
  font: 700 40px/70px Roboto, sans-serif;
`;

const tileArt: Record<string, React.ReactNode> = {
  keys: <><path d="M15 14h7v23h4v17q0 2-2 2h-9q-2 0-2-2V16q0-2 2-2zM32 14h7v23h3v17q0 2-2 2h-9q-2 0-2-2V37h3zM48 14h7q2 0 2 2v38q0 2-2 2h-8q-2 0-2-2V37h3z" /></>,
  loop: <><path d="M24 18h13a16 16 0 1 1-17 19" fill="none" stroke="currentColor" strokeWidth="8" /><path d="M18 14h10v8h-3zM19 26l8 11H11z" /></>,
  presets: <path d="M18 15h15l8 14-8 13H18l-8-13zM42 34h12l6 11-6 10H42l-6-10z" />,
  user: <><path d="M19 14h15l8 14-8 15H19l-8-15z" /><circle cx="42" cy="34" r="9" stroke="#a6aaad" strokeWidth="3" /><path d="M31 53q0-12 5-12q6 4 12 0q6 0 6 12q-11 6-23 0z" /></>,
  files: <><rect x="9" y="21" width="52" height="19" rx="3" /><circle cx="47" cy="30" r="3" fill="#a6aaad" /><circle cx="55" cy="30" r="3" fill="#a6aaad" /><circle cx="28" cy="41" r="11" fill="#a6aaad" /><circle cx="28" cy="41" r="7" fill="#a6aaad" stroke="currentColor" strokeWidth="4" /><path d="M33 46l9 9" stroke="currentColor" strokeWidth="4" /></>,
  star: <path d="M35 14l6 15 17 1-13 11 5 15-15-9-15 9 5-15-13-11 17-1z" stroke="currentColor" strokeWidth="3" strokeLinejoin="round" />,
};
const tiles: [string, string][] = [
  ["VST Instruments", "keys"], ["VST Effects", "fx"], ["Loops & Samples", "loop"], ["Presets", "presets"],
  ["User Presets", "user"], ["File Browser", "files"], ["Favorites", "star"],
];

const MediaRack = () => (
  <Side>
    <TabRow>
      <Tab $w={69}>VSTi</Tab>
      <Tab $on $w={81}>Media</Tab>
    </TabRow>
    <SidePanel $pad="8px 7px 8px 6px" $corner="6px">
      <SearchRow>
        <SearchBox><Icon n="find" s={15} /><SearchInput placeholder="Search" aria-label="Search media" /><ClearBtn aria-label="Clear"><Icon n="cross" s={12} /></ClearBtn></SearchBox>
        <FlatBtn $w={25} aria-label="List view"><Icon n="bullets" s={14} /></FlatBtn>
      </SearchRow>
      <Crumbs><FlatBtn $w={18} aria-label="Back"><Icon n="back" s={14} /></FlatBtn><button aria-label="Home"><Icon n="home" s={15} /></button></Crumbs>
      <Tiles>
        {tiles.map(([t, k]) => (
          <TileButton key={t}>
            <TileArt>{k === "fx" ? "FX" : <svg width="70" height="70" viewBox="0 0 70 70" fill="currentColor" aria-hidden="true">{tileArt[k]}</svg>}</TileArt>
            {t}
          </TileButton>
        ))}
      </Tiles>
    </SidePanel>
  </Side>
);

/* ---------- offline processing window ---------- */

const Dialog = styled.section`
  position: absolute;
  z-index: 5;
  left: 529px;
  top: 359px;
  display: flex;
  flex-direction: column;
  width: 760px;
  height: 507px;
  background: ${c.black};
  box-shadow: 0 1px 8px #000a;
`;
const DialogTitle = styled.header`
  display: flex;
  align-items: center;
  justify-content: space-between;
  height: 30px;
  padding: 0 1px 0 8px;
  background: #fff;
  color: #999;
`;
const CloseBtn = styled.button`
  width: 18px;
  height: 19px;
  background: #e3e3e3;
  color: #fff;
  font-size: 11px;
  margin-top: 3px;
`;
const DialogTools = styled.div`
  display: flex;
  align-items: center;
  height: 40px;
  padding: 0 9px 1px;
  background: ${c.panel};
`;
const ProcessBtn = styled.button`
  display: flex;
  align-items: center;
  gap: 23px;
  width: 100px;
  height: 25px;
  padding-left: 7px;
  border: 1px solid ${c.edge};
  border-radius: 3px;
  background: ${c.btn};
`;
const Center = styled.div`
  display: flex;
  align-items: flex-start;
  gap: 1px;
  margin: 0 auto;
`;
const Well = styled.div<{ $w: number }>`
  display: flex;
  align-items: center;
  justify-content: flex-end;
  gap: 8px;
  width: ${(p) => p.$w}px;
  height: 25px;
  padding-right: 7px;
  border: 1px solid ${c.edge};
  border-radius: 3px;
  background: ${c.well};
  font-size: 12px;
`;
const TailWell = styled(Well)`
  margin-left: 5px;
  padding-left: 3px;
  svg:first-child { margin-right: auto; }
`;
const Spin = () => (
  <svg width="8" height="16" viewBox="0 0 8 16" aria-hidden="true"><path d="M0 6l4-6 4 6zM0 10h8l-4 6z" fill="#f2f2f2" /></svg>
);
const LayoutBtn = styled.button`
  display: grid;
  place-items: center;
  width: 25px;
  height: 25px;
  border-radius: 3px;
  background: ${c.light};
  color: #111;
`;
const Panes = styled.div`
  display: grid;
  flex: 1;
  grid-template-columns: 307px 1fr;
  gap: 4px;
  padding: 4px;
`;
const Pane = styled.div`
  padding: 4px 4px;
  border: 2px solid ${c.btn};
  border-radius: 6px;
  background: ${c.panel};
`;
const PaneHead = styled.div`
  display: flex;
  align-items: center;
  gap: 3px;
  height: 26px;
  border-bottom: 1px solid #d5e3ef;
  font-weight: 600;
`;
const Alert = styled.span`
  width: 33px;
  margin-left: auto;
  font-size: 15px;
`;
const ProcessTable = styled.table`
  width: 100%;
  margin-top: 10px;
  border-collapse: separate;
  border-spacing: 0;
  table-layout: fixed;
  th { height: 21px; padding: 0; border-bottom: 1px solid #e6edf2; color: #d5e3ef; font-weight: 600; text-align: left; }
  td { height: 20px; padding: 0; background: #a2ccbf; color: #16201d; font-size: 11px; }
  td:first-child { padding-left: 7px; }
  td:last-child { padding-left: 6px; font-size: 15px; font-weight: 600; }
  tbody::before { content: ""; display: block; height: 3px; }
`;

const OfflineWindow = () => (
  <Dialog>
    <DialogTitle>Direct Offline Processing: PJ - Rasberry (Crash)-02<CloseBtn aria-label="Close">x</CloseBtn></DialogTitle>
    <DialogTools>
      <ProcessBtn><Icon n="plus" s={10} />Process</ProcessBtn>
      <Center>
        <Group><Tool aria-label="Play"><Icon n="right" s={18} /></Tool><Tool aria-label="Loop"><Icon n="loop" /></Tool></Group>
        <Icon n="left" s={9} />
        <TailWell $w={99}><Icon n="tail" s={18} />0 ms<Spin /></TailWell>
      </Center>
      <LayoutBtn aria-label="Layout"><Icon n="zoneL" /></LayoutBtn>
    </DialogTools>
    <Panes>
      <Pane>
        <PaneHead>PJ - Rasberry (Crash)-02<Alert>!</Alert></PaneHead>
        <ProcessTable>
          <colgroup><col width="30" /><col /><col width="60" /><col width="38" /></colgroup>
          <thead><tr><th /><th>Name</th><th>Range</th><th>Status</th></tr></thead>
          <tbody><tr><td><Icon n="process" /></td><td>Reverse</td><td /><td>!</td></tr></tbody>
        </ProcessTable>
      </Pane>
      <Pane>
        <PaneHead><SmallGroup><Tool aria-label="Delete"><Icon n="trash" s={15} /></Tool></SmallGroup>Reverse</PaneHead>
      </Pane>
    </Panes>
  </Dialog>
);

/* ---------- transport ---------- */

const Transport = styled.footer`
  display: flex;
  align-items: center;
  justify-content: space-between;
  height: 40px;
  padding: 0 6px 1px 9px;
  background: ${c.panel};
`;
const BigTime = styled(Group)<{ $w: number }>`
  width: ${(p) => p.$w}px;
  background: ${c.well};
  font-size: 14px;
  line-height: 25px;
  button { flex: none; background: ${c.btn}; }
  > span { flex: 1; padding-right: 8px; }
`;
const Main4 = styled.div`
  display: grid;
  grid-template-columns: repeat(4, 49px);
  height: 32px;
  border: 2px solid #a9adab;
  border-radius: 4px;
  background: #3f4346;
  color: ${c.light};
  overflow: hidden;
`;
const Tempo = styled(Group)`
  width: 107px;
  background: ${c.well};
  align-items: center;
  font-size: 12px;
  button { flex: none; height: 25px; background: ${c.light}; color: #111; }
  span { flex: 1; text-align: right; padding-right: 8px; }
  > svg { margin-right: 7px; }
`;
const Meter = styled.div`
  display: flex;
  justify-content: space-between;
  width: 75px;
  height: 31px;
  padding: 3px 2px 3px 21px;
  border-radius: 3px;
  background: #000;
  &::before { content: ""; width: 1px; background: #444; }
  &::after { content: ""; width: 4px; background: #f00; }
`;
const Aq = styled(Tool)`
  font-weight: 400;
  font-size: 14px;
`;

const TransportBar = () => (
  <Transport>
    <Row $gap={6}>
      <Group><Tool aria-label="Constrain delay"><Icon n="clock" s={17} /></Tool></Group>
      <Group><Tool $w={44} aria-label="Record mode"><Icon n="dot" s={16} /><Icon n="down" s={12} /></Tool></Group><Dots />
      <Group><Tool $w={44} aria-label="Audio mode"><Icon n="wave" s={18} /><Icon n="down" s={12} /></Tool></Group><Dots />
      <Group><Tool $w={44} aria-label="MIDI mode"><Icon n="midi" s={17} /><Icon n="down" s={12} /></Tool></Group><Dots />
      <Group><Aq $w={38}>AQ</Aq></Group>
    </Row>
    <Row $gap={6}>
      <BigTime $w={150}><Tool $mark aria-label="Left locator"><Icon n="locL" /></Tool><TimeValue v="1. 1. 1. 0" pitch={22} last={16} /></BigTime>
      <BigTime $w={150}><Tool $mark aria-label="Right locator"><Icon n="locR" /></Tool><TimeValue v="3. 3. 3. 79" pitch={22} last={17} /></BigTime>
      <Group><Tool $on aria-label="Lock"><Icon n="lock" s={14} /></Tool><Tool $mark aria-label="Punch in"><Icon n="punchIn" s={14} /></Tool><Tool $mark aria-label="Punch out"><Icon n="punchOut" s={14} /></Tool></Group>
      <Dots />
      <Main4>
        <Tool aria-label="Cycle"><Icon n="loop" /></Tool>
        <Tool $on aria-label="Stop"><Icon n="stop" /></Tool>
        <Tool aria-label="Play"><Icon n="playO" /></Tool>
        <Tool aria-label="Record"><Icon n="ring" s={18} /></Tool>
      </Main4>
      <Dots />
      <BigTime $w={150}><Tool aria-label="Time format"><Icon n="note" /></Tool><TimeValue v="1. 1. 1. 0" pitch={22} last={16} /></BigTime>
      <Dots />
      <Tempo><Tool aria-label="Tempo track"><Icon n="tempo" s={17} /></Tool><span>120.000</span><Spin /></Tempo>
      <Dots />
    </Row>
    <Row $gap={5}>
      <Group><Tool aria-label="Metronome"><Icon n="metro" /></Tool><Tool aria-label="Edit"><Icon n="e" s={18} /></Tool></Group>
      <Dots /><Meter /><Dots />
      <Group><Tool aria-label="Setup"><Icon n="gear" s={13} /></Tool></Group>
    </Row>
  </Transport>
);

/* ---------- taskbar ---------- */

const TaskBar = styled.footer`
  display: flex;
  height: 40px;
  background: #d4d4d4;
  color: #000;
`;
const Start = styled.button`
  display: grid;
  place-items: center;
  width: 49px;
`;
const TaskSearch = styled.label`
  display: flex;
  align-items: center;
  gap: 11px;
  width: 342px;
  margin: 1px 0;
  padding-left: 11px;
  background: #fff;
`;
const TaskInput = styled.input`
  flex: 1;
  font-size: 15px;
  line-height: 20px;
  &::placeholder { color: #333; opacity: 1; }
`;
const Apps = styled.div`
  display: flex;
  margin-right: auto;
  button:first-child { margin-right: 2px; }
`;
const AppBtn = styled.button<{ $run?: boolean; $on?: boolean }>`
  display: grid;
  place-items: center;
  width: 49px;
  background:
    linear-gradient(#3b97f2, #3b97f2) center bottom / ${(p) => (p.$run ? (p.$on ? "45px" : "40px") : "0")} 2px no-repeat,
    ${(p) => (p.$on ? "#ececec" : "none")};
`;
const Tray = styled.div`
  display: flex;
  align-items: center;
  gap: 9px;
  padding-right: 11px;
`;
const Clock = styled.time`
  margin: 0 10px 0 3px;
  text-align: center;
  line-height: 18px;
`;
const Badge = styled.span`
  position: relative;
  width: 28px;
  font: 700 21px/24px "Liberation Sans", sans-serif;
  color: #fff;
  b {
    position: absolute;
    right: -1px;
    bottom: -3px;
    width: 14px;
    height: 14px;
    border-radius: 50%;
    background: #444;
    font-size: 8px;
    line-height: 14px;
    text-align: center;
  }
`;
const Notes = styled(Badge)`
  margin-left: 7px;
  b { right: 4px; bottom: -8px; width: 16px; height: 16px; background: #d4d4d4; border: 1px solid #333; color: #111; font-size: 11px; line-height: 14px; }
`;

const Art = ({ children }: { children: React.ReactNode }) => (
  <svg width="24" height="24" viewBox="0 0 24 24" aria-hidden="true">{children}</svg>
);

const taskApps: { name: string; run?: boolean; on?: boolean; art: React.ReactNode }[] = [
  { name: "Task view", art: <Icon n="taskview" s={18} /> },
  { name: "Firefox", run: true, art: <Art><circle cx="12" cy="13" r="10" fill="#ff8a16" /><path d="M12 1q12 5 10 14-3 9-12 8Q2 21 2 12l2-7 3 3q2-5 5-7z" fill="#ffb01f" /><path d="M3 9q-3 13 9 14 8 0 10-9-4 6-10 5Q4 18 3 9z" fill="#f0304b" /><circle cx="12" cy="12" r="5" fill="#4438b0" /><path d="M7 10q5-3 8 2l-6 2z" fill="#ff8a16" /></Art> },
  { name: "Explorer", run: true, art: <Art><path d="M2 3h8l2 2h10v16H2z" fill="#f3c14a" /><path d="M2 7h20v14H2z" fill="#fbd872" /><path d="M5 13h14v9h-4v-5H9v5H5z" fill="#3e93d6" /></Art> },
  { name: "Store", art: <Art><path d="M1 7h22v16H1z" /><path d="M8 7q0-6 4-6t4 6" fill="none" stroke="#000" strokeWidth="2" /><path d="M7 10h5v5H7z" fill="#f25022" /><path d="M13 10h5v5h-5z" fill="#7fba00" /><path d="M7 16h5v5H7z" fill="#00a4ef" /><path d="M13 16h5v5h-5z" fill="#ffb900" /></Art> },
  { name: "Mail", art: <Art><path d="M0 8l12-6 12 6v13H0z" fill="#333" /><path d="M2 9h20l-9 8-3-4z" fill="#d4d4d4" /><path d="M14 13l8 8" stroke="#d4d4d4" /></Art> },
  { name: "Monitor", art: <Art><path d="M3 2h17v13H3z" fill="#eaf4fb" stroke="#888" /><path d="M4 12l3-6 3 7 3-8 3 7 3-3" fill="none" stroke="#3a8cc4" /><path d="M1 8l3 8 7 2 9-1 3 3q-2 3-6 1-9-1-13-4z" fill="#eee" stroke="#888" /></Art> },
  { name: "Photos", run: true, art: <Art><path d="M1 1h22v22H1z" fill="#cfcfcf" stroke="#000" /><path d="M1 19l7-10 5 6 3-4 7 8v4H1z" /></Art> },
  { name: "Edge", run: true, art: <Art><path d="M2 11Q4 1 13 1q9 0 10 9v4H9q1 5 7 5 3 0 6-2v5q-4 2-8 2-10-1-10-9 0-5 6-8-3 3-2 4h8q0-5-4-5-6 0-10 4z" fill="#0b78d6" /></Art> },
  { name: "Cubase", run: true, on: true, art: <CubaseMark s={20} /> },
];

const Desk = () => (
  <TaskBar>
    <Start aria-label="Start"><Icon n="windows" s={17} /></Start>
    <TaskSearch><Icon n="find" s={17} /><TaskInput placeholder="Type here to search" aria-label="Search the computer" /></TaskSearch>
    <Apps>{taskApps.map((a) => <AppBtn key={a.name} aria-label={a.name} $run={a.run} $on={a.on}>{a.art}</AppBtn>)}</Apps>
    <Tray>
      <Icon n="chevUp" s={13} /><Icon n="cloud" /><Icon n="mic" s={14} /><Icon n="battery" s={17} /><Icon n="wifi" s={14} /><Icon n="sound" s={17} />
      <span>ENG</span>
      <Clock>22:14<br />2019/08/10</Clock>
      <Badge>M<b>1</b></Badge>
      <Notes><svg width="18" height="18" viewBox="0 0 18 18" aria-hidden="true"><path d="M0 0h18v14H9l-4 4v-4H0z" fill="#111" /><path d="M3 4h12M3 7h12M3 10h8" stroke="#d4d4d4" /></svg><b>3</b></Notes>
    </Tray>
  </TaskBar>
);

/* ---------- page ---------- */

const tools = ["pointer", "range", "pencil", "eraser", "scissors", "glue", "cross", "zoomin", "hand", "line", "play2", "bucket"];

export default function App() {
  return (
    <Shell>
      <Global />
      <MenuBar>
        <CubaseMark s={18} />
        <Menus>{menus.map((m) => <button key={m}>{m}</button>)}</Menus>
        <WindowTitle>Cubase Artist Project - Untitled1</WindowTitle>
        <WinButtons>
          {["M2 8h12", "M2 5h8v8H2zM5 5V2h8v8h-3", "M2 2l11 11M13 2 2 13"].map((d, i) => (
            <button key={d} aria-label={["Minimize", "Restore", "Close"][i]}>
              <svg width="15" height="15" viewBox="0 0 15 15"><path d={d} fill="none" stroke="#000" /></svg>
            </button>
          ))}
        </WinButtons>
      </MenuBar>

      <ToolBar>
        <Row $gap={6}>
          <Activate aria-label="Activate project"><Icon n="bolt" s={18} /></Activate>
          <Group><Tool aria-label="Undo"><Icon n="undo" s={14} /></Tool><Tool aria-label="Redo"><Icon n="redo" s={14} /></Tool></Group>
        </Row>
        <Row $gap={6}>
          <Group>{["M", "S", "R", "W", "A"].map((t) => <Tool key={t}>{t}</Tool>)}</Group>
          <Group><Tool aria-label="Auto-scroll"><Icon n="autoscroll" /></Tool><Tool $split aria-label="Auto-scroll settings"><Icon n="down" s={12} /></Tool></Group>
          <Group>{tools.map((t, i) => <Tool key={t} aria-label={t} $on={i === 0} $mark={i === 0 || i === 9 || i === 10}><Icon n={t} s={15} /></Tool>)}</Group>
          <Group><Tool $w={44} aria-label="Colors"><Icon n="palette" s={18} /><Icon n="down" s={12} /></Tool></Group>
          <Group><Tool aria-label="Snap to zero crossing"><Icon n="xfade" s={18} /></Tool></Group>
          <Group>
            <Tool $on aria-label="Snap"><Icon n="snap" s={17} /></Tool>
            <SelectBox $w={124}><Select aria-label="Snap type"><option>Grid</option></Select><Icon n="down" s={12} /></SelectBox>
          </Group>
          <Group><SelectBox $w={150}><Icon n="hash" s={14} /><Select aria-label="Grid type"><option>Adapt to Zoom</option></Select><Icon n="down" s={12} /></SelectBox></Group>
          <Group>
            <Aq>Q</Aq>
            <SelectBox $w={99}><Select aria-label="Quantize preset"><option>1/16</option></Select><Icon n="down" s={12} /></SelectBox>
            <Tool $split aria-label="Apply quantize"><Icon n="quant" s={15} /></Tool><Tool aria-label="Audio warp"><Icon n="warp" s={15} /></Tool><Tool aria-label="Quantize panel"><Icon n="e" s={18} /></Tool>
          </Group>
        </Row>
        <Row $gap={3}>
          <Group><Tool $on aria-label="Left zone"><Icon n="zoneL" /></Tool><Tool aria-label="Lower zone"><Icon n="zoneB" /></Tool><Tool $on aria-label="Right zone"><Icon n="zoneR" /></Tool><Tool aria-label="Window layout"><Icon n="zoneSet" s={18} /></Tool></Group>
          <Group><Tool aria-label="Toolbar setup"><Icon n="gear" s={13} /></Tool></Group>
        </Row>
      </ToolBar>

      <InfoLine>
        {infoCells.map(([label, v, w, kind]) => (
          <InfoCell key={label} $w={w} $align={kind === "center" ? "center" : "left"}>
            <InfoLabel>{label}</InfoLabel>
            {kind === "time" ? <TimeValue v={v} /> : kind === "volume" ? <Split>{v}<i>dB</i></Split> : <span>{v}</span>}
          </InfoCell>
        ))}
        <InfoGear aria-label="Info line setup"><Icon n="gear" s={12} /></InfoGear>
      </InfoLine>

      <Main>
        <Inspector />
        <Project>
          <TrackList>
            <ListHead>
              <SmallGroup><Tool aria-label="Add track"><Icon n="plus" s={10} /></Tool><Tool aria-label="Track presets"><Icon n="down" s={11} /></Tool></SmallGroup>
              <Row $gap={6}>
                <Counter>4 / 4</Counter>
                <SmallGroup><Tool aria-label="Filter"><Icon n="list" s={14} /></Tool><Tool aria-label="Find track"><Icon n="find" s={13} /></Tool></SmallGroup>
              </Row>
            </ListHead>
            <IoRow><ColorBar><Icon n="folder" s={17} /></ColorBar><RowBody>Input/Output Channels</RowBody><BlackEnd /></IoRow>
            <TrackRow no={1} name="Crash (Reversed)" on />
            <TrackRow no={2} name="Crash (Normal)" />
            <ListFoot><span>Simple</span><Icon n="down" s={11} /><Icon n="gear" s={11} /></ListFoot>
          </TrackList>
          <Timeline>
            <Scroller>
              <Ruler>
                <Ticks /><Ticks $dark />
                {[1, 2, 3, 4, 5].map((b) => <BarNo key={b} $dark={b < 4} style={{ left: (b - 1) * 228 }}>{b}</BarNo>)}
                <Locator /><Locator $end />
              </Ruler>
              <Canvas>
                <Lane $h={20} />
                <Lane $h={102}><AudioClip name="PJ - Rasberry (Crash)-02" /></Lane>
                <Lane $h={102}><AudioClip name="PJ - Rasberry (Crash)-03" light /></Lane>
              </Canvas>
              <Playhead />
            </Scroller>
            <HScroll>
              <HTrack><HThumb /></HTrack>
              <Icon n="down" s={9} />-
              <HZoom><Range type="range" aria-label="Horizontal zoom" $fill="#77797c" $thumb="radial-gradient(#aaa 60%, transparent 65%)" defaultValue={50} /></HZoom>+
            </HScroll>
          </Timeline>
          <VStrip>
            <VMenu aria-label="Ruler menu"><Icon n="down" s={12} /></VMenu>
            <Icon n="line" s={10} />
            <VLine $h={50}><VKnob $y={45} /></VLine>
            <VGap />
            <VLine />
            <VGap />
            <Icon n="down" s={9} />-
            <VLine $h={48}><VKnob $y={8} /></VLine>+
          </VStrip>
        </Project>
        <MediaRack />
      </Main>

      <TransportBar />
      <Desk />
      <OfflineWindow />
    </Shell>
  );
}
